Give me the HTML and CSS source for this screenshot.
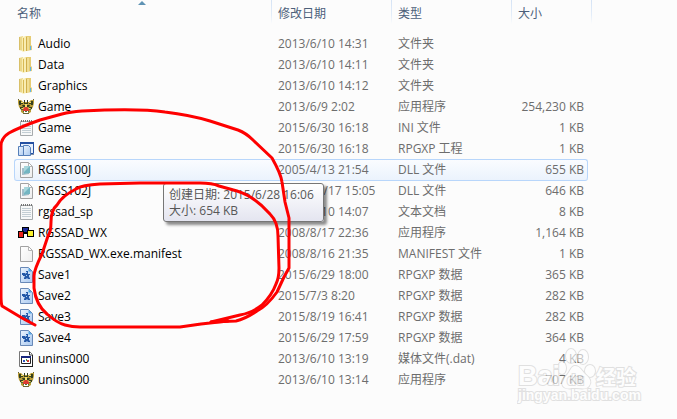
FILE: index.html
```
<!DOCTYPE html>
<html lang="zh-CN">

<head>
    <meta charset="UTF-8">
    <meta name="viewport" content="width=device-width, initial-scale=1.0">
    <title>文件列表</title>
    <link rel="stylesheet" href="styles.css">
</head>

<body>
    <!-- icon shapes, used by the rows below -->
    <svg class="sprite" aria-hidden="true">
        <defs>
            <linearGradient id="sheet" x1="0" x2="1" y1="0" y2="1">
                <stop offset="0" stop-color="#ffffff" />
                <stop offset="1" stop-color="#eeeeee" />
            </linearGradient>
            <linearGradient id="blue" x1="0" x2="1" y1="0" y2="1">
                <stop offset="0" stop-color="#eaf3fd" />
                <stop offset="1" stop-color="#a9c8ef" />
            </linearGradient>
        </defs>
        <symbol id="folder" viewBox="0 0 16 16">
            <path d="M7 0h6v9l1 1v4l-6 1z" fill="#e6cc74" />
            <path d="M1 1 5 0v15l-4-1z" fill="#ecd88a" />
            <path d="M1 1h1v13H1z" fill="#d9c069" />
            <path d="M4 1l4-1v15l-3 1-1-1z" fill="#f9edb2" />
            <path d="M5 2h1v13H5z" fill="#d8b955" />
            <path d="M8 1h1v14H8z" fill="#cfae4c" />
            <path d="M9 1h2v13H9z" fill="#f1de93" />
            <path d="M12 10h1v4h-1z" fill="#5eb6e8" />
        </symbol>
        <symbol id="mask" viewBox="0 0 16 16">
            <path d="M0 1h3l2 2h6l2-2h3v3l-1 4-2 3v2l-3 2H6l-3-2v-2L1 8 0 4z" fill="#b89b37" />
            <path d="M1 2h2v2h2v1H3v1H1zM15 2h-2v2h-2v1h2v1h2zM6 1h1v3h2V1h1v4H6zM2 8h3v1H3v1H2zM14 8h-3v1h2v1h1zM4 6h3v2H5zM12 6H9v2h2z" fill="#35401f" />
            <path d="M3 3h2v1H3zM11 3h2v1h-2zM7 5h2v3H7zM4 9h2v1H4zM10 9h2v1h-2z" fill="#f4df6c" />
            <path d="M5 10l2-2h2l2 2v2H5z" fill="#dd3c32" />
            <path d="M3 10h2v1H3zM11 10h2v1h-2zM5 12h6v1H5z" fill="#4d713a" />
            <path d="M6 12h1v2H6zM9 12h1v2H9zM7 13h2v1H7z" fill="#fff" />
            <path d="M0 0h1v1H0zM15 0h1v1h-1zM5 14h6v1H5z" fill="#6b6437" />
        </symbol>
        <symbol id="note" viewBox="0 0 16 16">
            <path d="M2.500 1.500h12v14h-12z" fill="#f7f8f8" stroke="#a6aaac" />
            <path d="M3 1h11" stroke="#737373" stroke-width="2" stroke-dasharray="1 1" />
            <path d="M4 4.500h9M4 6.500h9M4 8.500h9M4 10.500h9M4 12.500h9" stroke="#c3ced4" />
        </symbol>
        <symbol id="project" viewBox="0 0 16 16">
            <path d="M2.500 1.500h13v11h-13z" fill="#e7f0fc" stroke="#2450a2" />
            <path d="M2 1h14v2H2z" fill="#2450a2" />
            <path d="M.5 5.500h5l2 2v7h-7z" fill="url(#blue)" stroke="#557fb9" />
            <path d="M5.500 4.500h5l2 2v8h-7z" fill="url(#blue)" stroke="#557fb9" />
            <path d="M13 13h3v1h-3z" fill="#8291a5" />
        </symbol>
        <symbol id="page" viewBox="0 0 16 16">
            <path d="M2.500 .5h8l4 4v11h-12z" fill="url(#sheet)" stroke="#a2a2a2" />
            <path d="M10.500 1v3.500H14" fill="#fff" stroke="#b5b5b5" />
        </symbol>
        <symbol id="dll" viewBox="0 0 16 16">
            <use href="#page" />
            <path d="M6 4.500l6-.5v7l-6 1z" fill="#74b6c2" />
            <path d="M6 4.500l6-.5-6 6z" fill="#a9d8dd" />
            <path d="M4 6h2v6l5-1v1l-6 1H4z" fill="#6c96a8" opacity=".6" />
        </symbol>
        <symbol id="save" viewBox="0 0 16 16">
            <path d="M2.500 .5h8l4 4v11h-12z" fill="url(#blue)" stroke="#6989b7" />
            <path d="M10.500 1v3.500H14z" fill="#4aa5e5" />
            <path d="M4 6h3l1 1V4h2v3h2v1h-1v2l1 1v1h-2l-1-1-1 1H6v-1l1-2H5V8H4z" fill="#2459a8" />
            <path d="M8 5h1v1H8zM8 8h1v1H8z" fill="#a9d0f5" />
        </symbol>
        <symbol id="blocks" viewBox="0 0 16 16">
            <path d="M4 2h7v7H4z" fill="#000" />
            <path d="M5 3h5v4H5z" fill="#1b2b9c" />
            <path d="M0 6h6v7H0z" fill="#000" />
            <path d="M1 7h4v5H1z" fill="#e8221b" />
            <path d="M9 5h7v7H9z" fill="#000" />
            <path d="M10 6h5v5h-5z" fill="#fbf12d" />
        </symbol>
        <symbol id="media" viewBox="0 0 16 16">
            <path d="M1.500 .5h10l3 3v12h-13z" fill="#fff" stroke="#777" />
            <path d="M11.500 1v3H14" fill="none" stroke="#333" />
            <path d="M14 4h1v12H2v-1h12z" fill="#222" />
            <path d="M3.500 5.500h9v7h-9z" fill="#fff" stroke="#222" />
            <path d="M3 5h10v2H3z" fill="#17267f" />
            <path d="M5 9h2v2H5z" fill="#3156bf" />
            <path d="M8 8h1v2H8z" fill="#3c9a50" />
            <path d="M9 9h2v2H9z" fill="#d73b32" />
        </symbol>
    </svg>

    <main class="explorer">
        <table class="files">
            <colgroup>
                <col>
                <col class="col-date">
                <col class="col-type">
                <col class="col-size">
                <col class="col-rest">
            </colgroup>
            <thead>
                <tr>
                    <th class="sorted" aria-sort="ascending"><button type="button">名称</button></th>
                    <th><button type="button">修改日期</button></th>
                    <th><button type="button">类型</button></th>
                    <th><button type="button">大小</button></th>
                    <td class="rest"></td>
                </tr>
            </thead>
            <tbody>
                <tr><td><svg class="icon"><use href="#folder" /></svg>Audio</td><td>2013/6/10 14:31</td><td>文件夹</td><td></td></tr>
                <tr><td><svg class="icon"><use href="#folder" /></svg>Data</td><td>2013/6/10 14:11</td><td>文件夹</td><td></td></tr>
                <tr><td><svg class="icon"><use href="#folder" /></svg>Graphics</td><td>2013/6/10 14:12</td><td>文件夹</td><td></td></tr>
                <tr><td><svg class="icon"><use href="#mask" /></svg>Game</td><td>2013/6/9 2:02</td><td>应用程序</td><td>254,230 KB</td></tr>
                <tr><td><svg class="icon"><use href="#note" /></svg>Game</td><td>2015/6/30 16:18</td><td>INI 文件</td><td>1 KB</td></tr>
                <tr><td><svg class="icon"><use href="#project" /></svg>Game</td><td>2015/6/30 16:18</td><td>RPGXP 工程</td><td>1 KB</td></tr>
                <tr class="hovered"><td><svg class="icon"><use href="#dll" /></svg>RGSS100J</td><td>2005/4/13 21:54</td><td>DLL 文件</td><td>655 KB</td></tr>
                <tr><td><svg class="icon"><use href="#dll" /></svg>RGSS102J</td><td>2005/12/17 15:05</td><td>DLL 文件</td><td>646 KB</td></tr>
                <tr><td><svg class="icon"><use href="#note" /></svg>rgssad_sp</td><td>2013/6/10 14:07</td><td>文本文档</td><td>8 KB</td></tr>
                <tr><td><svg class="icon"><use href="#blocks" /></svg>RGSSAD_WX</td><td>2008/8/17 22:36</td><td>应用程序</td><td>1,164 KB</td></tr>
                <tr><td><svg class="icon"><use href="#page" /></svg>RGSSAD_WX.exe.manifest</td><td>2008/8/16 21:35</td><td>MANIFEST 文件</td><td>1 KB</td></tr>
                <tr><td><svg class="icon"><use href="#save" /></svg>Save1</td><td>2015/6/29 18:00</td><td>RPGXP 数据</td><td>365 KB</td></tr>
                <tr><td><svg class="icon"><use href="#save" /></svg>Save2</td><td>2015/7/3 8:20</td><td>RPGXP 数据</td><td>282 KB</td></tr>
                <tr><td><svg class="icon"><use href="#save" /></svg>Save3</td><td>2015/8/19 16:41</td><td>RPGXP 数据</td><td>282 KB</td></tr>
                <tr><td><svg class="icon"><use href="#save" /></svg>Save4</td><td>2015/6/29 17:59</td><td>RPGXP 数据</td><td>364 KB</td></tr>
                <tr><td><svg class="icon"><use href="#media" /></svg>unins000</td><td>2013/6/10 13:19</td><td>媒体文件(.dat)</td><td>4 KB</td></tr>
                <tr><td><svg class="icon"><use href="#mask" /></svg>unins000</td><td>2013/6/10 13:14</td><td>应用程序</td><td>707 KB</td></tr>
            </tbody>
        </table>

        <div class="tooltip" role="tooltip">
            创建日期: 2015/6/28 16:06<br>
            大小: 654 KB
        </div>

        <!-- hand-drawn red marker line -->
        <svg class="marker" width="300" height="340" viewBox="0 0 300 340" aria-hidden="true">
            <path d="M35 325 L22 318 L2 306 Q1 303 1 296 L1 146 Q1 138 9 133 Q20 127 40 120 L62 114 Q70 112 82 111 Q138 108 165 112 Q190 115 210 121 L238 130 Q246 133 253 140 L272 158 Q281 174 282 182 L285 202 L289 218 L289 268 L284 277 L277 292 Q267 306 257 311 Q245 319 236 321 L211 322" />
            <path d="M211 322 L240 315 Q252 313 262 305 Q272 295 276 284 Q279 278 279 268 L278 236 Q278 222 270 214 Q254 196 237 191 L219 186 Q212 183 200 183 L140 183 L100 184 Q82 185 76 189 Q62 196 57 205 Q51 210 51 222 Q51 232 48 236 L42 254 Q34 270 34 276 L34 288 Q36 305 47 314 Q57 323 65 325 Q72 327 80 327 L180 327 L201 324 L228 321" />
        </svg>

        <svg class="watermark" width="126" height="62" viewBox="0 0 126 62" aria-hidden="true">
            <ellipse cx="45" cy="23" rx="4" ry="6" />
            <ellipse cx="54" cy="11" rx="5" ry="7" />
            <ellipse cx="66" cy="12" rx="5" ry="7" />
            <ellipse cx="73" cy="26" rx="5" ry="6" />
            <path d="M58 21c5 0 7 5 10 8 5 4 7 8 4 12-3 4-8 2-13 2s-10 2-13-2c-3-5 1-8 4-11s4-9 8-9z" />
            <text class="wm-latin" x="1" y="40">Bai</text>
            <text class="wm-du" x="50" y="40">du</text>
            <text class="wm-cjk" x="79" y="40">经验</text>
            <text class="wm-url" x="1" y="55">jingyan.baidu.com</text>
        </svg>
    </main>
</body>

</html>
```
FILE: styles.css
```
body {
    margin: 0;
    background-color: #fcfcfc;
    font-family: "Open Sans", "Noto Sans CJK SC", sans-serif;
    font-size: 12px;
    line-height: 16px;
    color: #6d6d6d;
}

.sprite {
    display: block;
    width: 0;
    height: 0;
}

.explorer {
    position: relative;
    min-height: 100vh;
    padding-left: 14px;
    box-sizing: border-box;
}

.files {
    width: 100%;
    table-layout: fixed;
    border-collapse: separate;
    border-spacing: 0;
    white-space: nowrap;
}

.col-date,
.col-type {
    width: 120px;
}

.col-size {
    width: 77px;
}

.col-rest {
    width: 89px;
}

/* column headers */
th,
.rest {
    position: relative;
    height: 33px;
    padding: 0;
    vertical-align: top;
    text-align: left;
    font-weight: normal;
    background: linear-gradient(#d5e3f5, #e3edf9 15px, #fcfcfc) no-repeat 0 0 / 1px 24px;
}

th button {
    display: block;
    width: 100%;
    padding: 6px 7px;
    border: none;
    background: none;
    font: inherit;
    color: #4c607a;
    text-align: left;
}

th.sorted {
    background: none;
}

th.sorted button {
    padding-left: 3px;
}

th.sorted::after {
    content: "";
    position: absolute;
    top: 1px;
    left: 50%;
    margin-left: -5px;
    border: 4px solid transparent;
    border-top: none;
    border-bottom-color: #5f93b4;
}

.rest {
    background-position: 3px 0;
}

/* file rows */
tbody td {
    height: 21px;
    padding: 0 7px;
    box-sizing: border-box;
}

tbody td:first-child {
    padding-left: 4px;
    color: #000;
}

tbody td:nth-child(4) {
    padding: 0 4px 0 0;
    text-align: right;
}

.icon {
    width: 16px;
    height: 16px;
    margin-right: 4px;
    vertical-align: -4px;
}

.hovered td {
    background: linear-gradient(#fafcff, #ebf3fd);
    border-top: 1px solid #b8d6fb;
    box-shadow: 0 1px 0 #b8d6fb;
}

.hovered td:first-child {
    border-left: 1px solid #b8d6fb;
    border-radius: 3px 0 0 3px;
    padding-left: 3px;
}

.hovered td:last-child {
    border-right: 1px solid #b8d6fb;
    border-radius: 0 3px 3px 0;
    padding-right: 3px;
}

.tooltip {
    position: absolute;
    top: 183px;
    left: 163px;
    padding: 3px 9px 2px 5px;
    border: 1px solid #767676;
    border-radius: 3px;
    background: linear-gradient(#ffffff, #e4e5f0);
    box-shadow: 3px 3px 3px rgba(0, 0, 0, 0.45);
    color: #575757;
    white-space: nowrap;
}

.marker {
    position: absolute;
    top: 0;
    left: 0;
    fill: none;
    stroke: #fe0000;
    stroke-width: 3;
    stroke-linecap: round;
    stroke-linejoin: round;
    pointer-events: none;
}

/* watermark in the corner */
.watermark {
    position: absolute;
    right: 34px;
    bottom: 12px;
    fill: #fff;
    stroke: #cfcfcf;
    stroke-width: 2;
    paint-order: stroke;
    opacity: 0.6;
    pointer-events: none;
}

.wm-latin {
    font: bold 27px "Liberation Sans", sans-serif;
}

.wm-du {
    font: bold 14px "Liberation Sans", sans-serif;
}

.wm-cjk {
    font: bold 20px "Noto Sans CJK SC", sans-serif;
}

.wm-url {
    font: bold 14px "Liberation Sans", sans-serif;
}
```
